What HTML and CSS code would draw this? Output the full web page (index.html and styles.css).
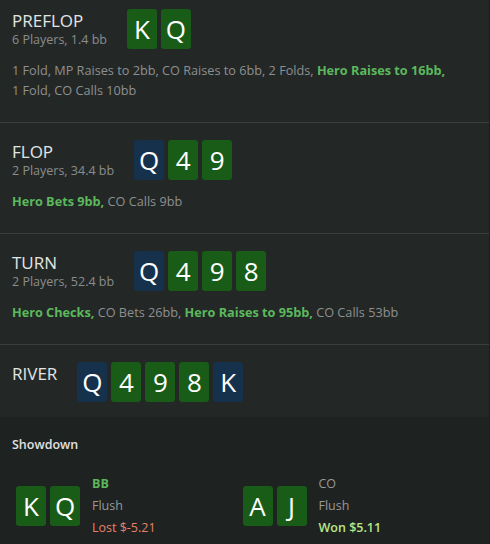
FILE: index.html
```html
<!DOCTYPE html>
<html lang="en">
<head>
  <meta charset="UTF-8" />
  <meta name="viewport" content="width=device-width, initial-scale=1" />
  <title>Hand Replay</title>
  <link rel="stylesheet" href="styles.css">
</head>
<body>

<div class="hand">
  <div class="street street-first">
    <div class="street-head">
      <div class="street-info">
        <div class="street-name">PREFLOP</div>
        <div class="street-pot">6 Players, 1.4 bb</div>
      </div>
      <div class="cards">
        <span class="card green">K</span>
        <span class="card green">Q</span>
      </div>
    </div>
    <p class="actions">1&nbsp;Fold, MP Raises to 2bb, CO Raises to 6bb, 2&nbsp;Folds, <b class="hero">Hero Raises to 16bb,</b> 1&nbsp;Fold, CO Calls 10bb</p>
  </div>

  <div class="street">
    <div class="street-head">
      <div class="street-info">
        <div class="street-name">FLOP</div>
        <div class="street-pot">2 Players, 34.4 bb</div>
      </div>
      <div class="cards">
        <span class="card blue">Q</span>
        <span class="card green">4</span>
        <span class="card green">9</span>
      </div>
    </div>
    <p class="actions"><b class="hero">Hero Bets 9bb,</b> CO Calls 9bb</p>
  </div>

  <div class="street">
    <div class="street-head">
      <div class="street-info">
        <div class="street-name">TURN</div>
        <div class="street-pot">2 Players, 52.4 bb</div>
      </div>
      <div class="cards">
        <span class="card blue">Q</span>
        <span class="card green">4</span>
        <span class="card green">9</span>
        <span class="card green">8</span>
      </div>
    </div>
    <p class="actions"><b class="hero">Hero Checks,</b> CO Bets 26bb, <b class="hero">Hero Raises to 95bb,</b> CO Calls 53bb</p>
  </div>

  <div class="street street-last">
    <div class="street-head">
      <div class="street-info">
        <div class="street-name">RIVER</div>
      </div>
      <div class="cards">
        <span class="card blue">Q</span>
        <span class="card green">4</span>
        <span class="card green">9</span>
        <span class="card green">8</span>
        <span class="card blue">K</span>
      </div>
    </div>
  </div>

  <div class="showdown">
    <h3>Showdown</h3>
    <div class="players">
      <div class="player">
        <div class="cards">
          <span class="card green">K</span>
          <span class="card green">Q</span>
        </div>
        <div class="player-info">
          <div class="seat hero">BB</div>
          <div class="hand-rank">Flush</div>
          <div class="result lost">Lost $-5.21</div>
        </div>
      </div>
      <div class="player">
        <div class="cards">
          <span class="card green">A</span>
          <span class="card green">J</span>
        </div>
        <div class="player-info">
          <div class="seat">CO</div>
          <div class="hand-rank">Flush</div>
          <div class="result won">Won $5.11</div>
        </div>
      </div>
    </div>
  </div>
</div>

</body>
</html>
```

FILE: styles.css
```css
body {
  font-family: "Open Sans", "Noto Sans", sans-serif;
  background: #232827;
  margin: 0;
  padding: 0;
  color: #999;
}
.hand {
  height: 544px;
  border-right: 1px solid #1b1d1d;
  overflow: hidden;
}
.street {
  padding: 17px 12px 17px;
  border-bottom: 1px solid #3a3e3d;
}
.street-first {
  padding-top: 9px;
}
.street-last {
  border-bottom: none;
  padding-bottom: 15px;
}
.street-head {
  display: flex;
  align-items: flex-start;
  gap: 20px;
}
.street-info {
  padding-top: 2px;
}
.street-name {
  font-size: 17px;
  line-height: 20px;
  color: #e4e4e4;
}
.street-pot {
  font-size: 12.5px;
  line-height: 18px;
  color: #8c8c8c;
}
.cards {
  display: flex;
  gap: 4px;
}
.card {
  width: 30px;
  height: 40px;
  border-radius: 3px;
  color: #fff;
  font-size: 26px;
  line-height: 40px;
  text-align: center;
}
.green {
  background: #185c18;
}
.blue {
  background: #15314c;
}
.actions {
  margin: 11px 0 5px;
  font-size: 12.7px;
  line-height: 20px;
  color: #8f8f8f;
}
.hero {
  color: #5cb85c;
  font-weight: 700;
}
.showdown {
  background: #1e2220;
  padding: 19px 20px 20px 16px;
  height: 200px;
}
.showdown h3 {
  margin: 0 0 0 -4px;
  font-size: 12.5px;
  font-weight: 600;
  color: #e0e0e0;
}
.players {
  display: grid;
  grid-template-columns: 1fr 1fr;
  margin-top: 20px;
}
.player {
  display: flex;
  align-items: center;
  gap: 12px;
}
.player-info {
  font-size: 12.5px;
  line-height: 22px;
}
.lost {
  color: #e8816d;
}
.won {
  color: #b8e68a;
  font-weight: 600;
}
```
